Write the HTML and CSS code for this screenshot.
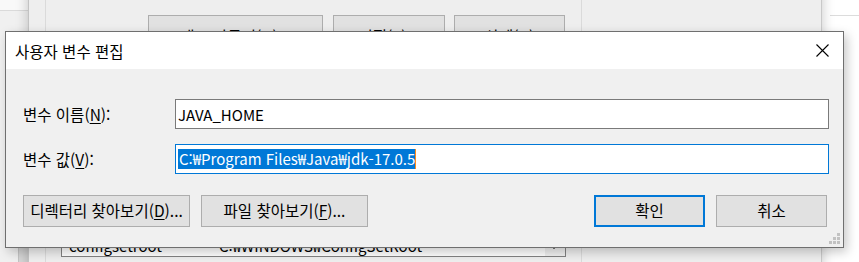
FILE: index.html
```html
<!DOCTYPE html>
<html lang="ko">
<head>
<meta charset="utf-8">
<title>사용자 변수 편집</title>
<link rel="stylesheet" href="styles.css">
</head>
<body>
<div class="screen">
  <div class="sys-win">
    <div class="sys-top"></div>
    <div class="sys-block"></div>
  </div>
  <div class="right-win"><div class="right-line"></div></div>
  <div class="env-win">
    <div class="env-group">
      <div class="env-buttons">
        <div class="btn bg-btn w175">새로 만들기(<u>N</u>)...</div>
        <div class="btn bg-btn w112">편집(<u>E</u>)...</div>
        <div class="btn bg-btn w111">삭제(<u>D</u>)</div>
      </div>
      <div class="env-list">
        <div class="list-rows">
          <div class="list-row"><span class="col1">configsetroot</span><span class="col2">C:₩WINDOWS₩ConfigSetRoot</span></div>
        </div>
        <div class="list-scroll"><div class="thumb"></div></div>
      </div>
    </div>
  </div>

  <div class="dialog">
    <div class="titlebar">
      <span class="title">사용자 변수 편집</span>
      <svg class="close" width="13" height="13" viewBox="0 0 13 13"><path d="M0.5 0.5 L12.5 12.5 M12.5 0.5 L0.5 12.5" stroke="#000" stroke-width="1.1" fill="none"/></svg>
    </div>
    <div class="dbody">
      <div class="field">
        <label class="flabel">변수 이름(<u>N</u>):</label>
        <div class="input">JAVA_HOME</div>
      </div>
      <div class="field">
        <label class="flabel">변수 값(<u>V</u>):</label>
        <div class="input focus"><span class="sel">C:₩Program Files₩Java₩jdk-17.0.5</span><span class="caret"></span></div>
      </div>
      <div class="actions">
        <div class="btn w167">디렉터리 찾아보기(<u>D</u>)...</div>
        <div class="btn w167">파일 찾아보기(<u>F</u>)...</div>
        <div class="spacer"></div>
        <div class="btn w111 default">확인</div>
        <div class="btn w111">취소</div>
      </div>
    </div>
    <svg class="grip" width="11" height="11" viewBox="0 0 11 11" fill="#c2c2c2">
      <rect x="8" y="0" width="3" height="3"/>
      <rect x="4" y="4" width="3" height="3"/><rect x="8" y="4" width="3" height="3"/>
      <rect x="0" y="8" width="3" height="3"/><rect x="4" y="8" width="3" height="3"/><rect x="8" y="8" width="3" height="3"/>
    </svg>
  </div>
</div>
</body>
</html>
```
FILE: styles.css
```css
* { box-sizing: border-box; }
html, body { margin: 0; padding: 0; }
body {
  width: 859px;
  height: 262px;
  overflow: hidden;
  background: #ffffff;
  font-family: "Noto Sans CJK KR", "Noto Sans", sans-serif;
  font-size: 15px;
  color: #000;
}
u { text-decoration: underline; text-underline-offset: 2px; text-decoration-thickness: 1px; }

.screen { position: relative; width: 859px; height: 262px; overflow: hidden; background: #fff; }

/* window far behind on the left */
.sys-win {
  position: absolute; left: 0; top: 0; width: 40px; height: 262px;
  background: #f0f0f0;
}
.sys-top { height: 11px; background: #f9f9f9; border-bottom: 1px solid #dadada; }
.sys-block {
  position: absolute; left: 18px; top: 247px; width: 14px; height: 20px;
  background: #d9d9d9; border: 1px solid #c6c6c6;
}

/* window far behind on the right */
.right-win {
  position: absolute; left: 800px; top: 0; width: 59px; height: 262px; background: #fff;
}
.right-line { margin: 15px 0 0 30px; height: 1px; background: #dcdcdc; }

/* environment variables window */
.env-win {
  position: absolute; left: 28px; top: -40px; width: 794px; height: 320px;
  background: #eeeeee;
  border-left: 1px solid #c3c3c3;
  border-right: 1px solid #c9c9c9;
  box-shadow: 0 0 12px rgba(0,0,0,0.22);
}
.env-group {
  margin-left: 16px; width: 537px; height: 100%;
  border-left: 1px solid #dadada; border-right: 1px solid #dadada;
  padding-top: 55px;
}
.env-buttons { display: flex; justify-content: flex-end; gap: 10px; padding-right: 16px; }
.env-buttons .btn:last-child { margin-left: -1px; }
.bg-btn { height: 32px; padding-top: 12px; }
.env-list {
  margin: 0 15px 0 15px; height: 202px; margin-top: 8px;
  border: 1px solid #828282; background: #fff;
  display: flex;
}
.list-rows { flex: 1; display: flex; flex-direction: column; justify-content: flex-end; }
.list-row { height: 18px; line-height: 16px; display: flex; white-space: nowrap; }
.col1 { width: 157px; padding-left: 7px; }
.list-scroll { width: 20px; background: #f0f0f0; position: relative; }
.thumb { position: absolute; left: 8px; bottom: 7px; width: 2px; height: 4px; background: #777; }

/* buttons */
.btn {
  height: 32px;
  display: flex; align-items: center; justify-content: center;
  background: #e1e1e1;
  border: 1px solid #adadad;
  white-space: nowrap;
  line-height: 1;
  font-size: 15.5px;
}
.w175 { width: 175px; }
.w112 { width: 112px; }
.w111 { width: 111px; }
.w167 { width: 167px; }
.default { border: 2px solid #0078d7; }

/* dialog */
.dialog {
  position: absolute; left: 5px; top: 31px; width: 839px; height: 217px;
  background: #f0f0f0;
  border: 1px solid #6f6f6f;
  box-shadow: 3px 4px 10px rgba(0,0,0,0.22);
  display: flex; flex-direction: column;
}
.titlebar {
  height: 37px; background: #fff;
  display: flex; align-items: center; justify-content: space-between;
  padding-left: 9px; padding-right: 14px;
}
.title { font-size: 15.5px; }
.close { display: block; }
.dbody { padding: 30px 14px 0 17px; }
.field { display: flex; align-items: center; height: 30px; margin-bottom: 15px; }
.field + .field { margin-bottom: 21px; }
.flabel { width: 152px; flex: none; font-size: 15.5px; }
.input {
  flex: 1; height: 30px; background: #fff;
  border: 1px solid #7a7a7a;
  padding-left: 2px;
  display: flex; align-items: center;
  white-space: nowrap;
}
.input.focus { border-color: #0078d7; }
.sel { background: #0078d7; color: #fff; line-height: 20px; height: 20px; padding-left: 1px; }
.caret { width: 1px; height: 20px; background: #ff8c1a; }
.actions { display: flex; gap: 11px; padding-right: 2px; }
.spacer { flex: 1; }

.grip { position: absolute; right: 3px; bottom: 3px; }
```
